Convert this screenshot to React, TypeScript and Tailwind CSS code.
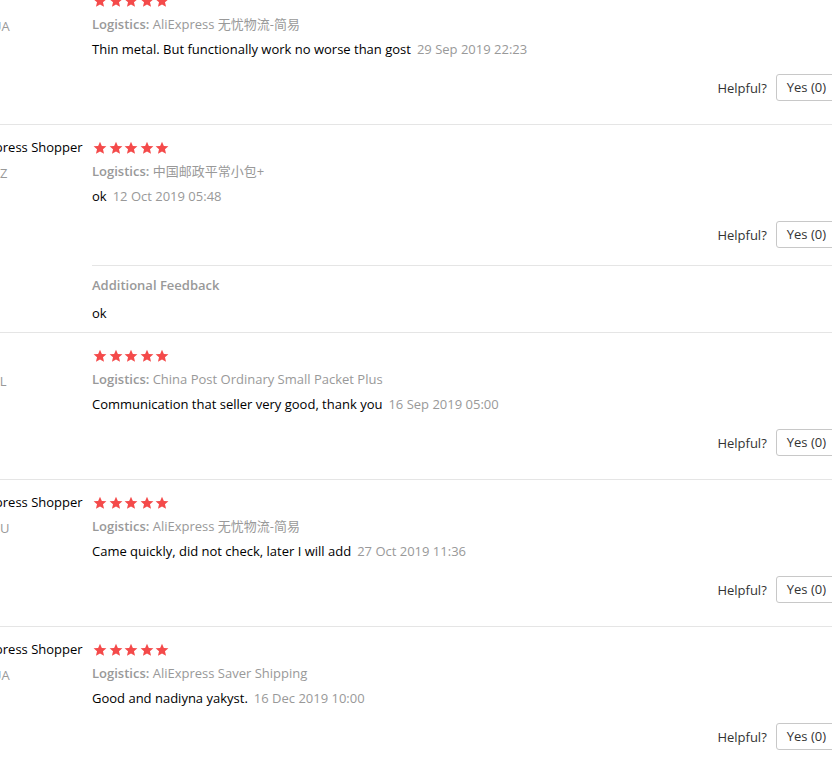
import React from 'react';

interface Review {
  name: string;
  country: string;
  logistics: string;
  comment: string;
  date: string;
  additional?: string;
}

const reviews: Review[] = [
  {
    name: 'I***',
    country: 'UA',
    logistics: 'AliExpress 无忧物流-简易',
    comment: 'Thin metal. But functionally work no worse than gost',
    date: '29 Sep 2019 22:23',
  },
  {
    name: 'AliExpress Shopper',
    country: 'KZ',
    logistics: '中国邮政平常小包+',
    comment: 'ok',
    date: '12 Oct 2019 05:48',
    additional: 'ok',
  },
  {
    name: 'I***',
    country: 'PL',
    logistics: 'China Post Ordinary Small Packet Plus',
    comment: 'Communication that seller very good, thank you',
    date: '16 Sep 2019 05:00',
  },
  {
    name: 'AliExpress Shopper',
    country: 'RU',
    logistics: 'AliExpress 无忧物流-简易',
    comment: 'Came quickly, did not check, later I will add',
    date: '27 Oct 2019 11:36',
  },
  {
    name: 'AliExpress Shopper',
    country: 'UA',
    logistics: 'AliExpress Saver Shipping',
    comment: 'Good and nadiyna yakyst.',
    date: '16 Dec 2019 10:00',
  },
];

function Star() {
  return (
    <svg viewBox="0 0 24 24" className="w-[14px] h-[14px]">
      <path
        d="M12 1.2l3.2 7.2 7.8.7-5.9 5.2 1.8 7.7L12 18l-6.9 4 1.8-7.7L1 9.1l7.8-.7z"
        fill="#f44a4a"
      />
    </svg>
  );
}

function ReviewRow({ review }: { review: Review }) {
  return (
    <div className="flex border-b border-[#e5e5e5]">
      <div className="w-[126px] shrink-0 pt-[12px]">
        <div className="text-[13px] leading-[20px] text-[#000] whitespace-nowrap">{review.name}</div>
        <div className="mt-[6px] flex items-center text-[13px] leading-[20px] text-[#999]">
          <span className="w-[16px] h-[11px] mr-[10px] bg-[#e8e8e8]" />
          {review.country}
        </div>
      </div>
      <div className="flex-1">
        <div className={review.additional ? 'pt-[17px] pb-[17px] border-b border-[#e5e5e5]' : 'pt-[17px] pb-[23px]'}>
          <div className="flex h-[12px] items-center gap-[1.5px] pl-[1px]">
            <Star />
            <Star />
            <Star />
            <Star />
            <Star />
          </div>
          <div className="mt-[7px] text-[13px] leading-[20px] text-[#999]">
            <span className="font-semibold">Logistics:</span> {review.logistics}
          </div>
          <div className="mt-[5px] text-[13px] leading-[20px] text-[#000]">
            {review.comment}
            <span className="ml-[6px] text-[#999]">{review.date}</span>
          </div>
          <div className="mt-[15px] flex items-center justify-end">
            <span className="pt-[2px] text-[13px] text-[#333]">Helpful?</span>
            <button className="ml-[9px] h-[27px] px-[10px] border border-[#c8c8c8] rounded-[3px] bg-white text-[13px] text-[#333]">
              Yes (0)
            </button>
          </div>
        </div>
        {review.additional && (
          <div className="pt-[9px] pb-[9px]">
            <div className="text-[13px] leading-[20px] font-semibold text-[#999]">Additional Feedback</div>
            <div className="mt-[8px] text-[13px] leading-[20px] text-[#000]">{review.additional}</div>
          </div>
        )}
      </div>
    </div>
  );
}

export default function App() {
  return (
    <div
      className="w-[832px] h-[762px] overflow-hidden bg-white"
      style={{ fontFamily: '"Open Sans", "Noto Sans CJK SC", sans-serif' }}
    >
      <div className="-mt-[22px] -ml-[34px] w-[871px]">
        {reviews.map((r, i) => (
          <ReviewRow key={i} review={r} />
        ))}
      </div>
    </div>
  );
}
